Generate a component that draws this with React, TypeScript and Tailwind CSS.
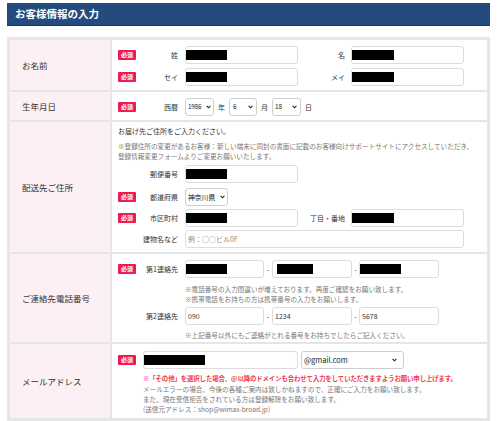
import React from "react";

function Badge() {
  return (
    <span className="w-[18px] h-[10px] shrink-0 bg-[#ee1b52] text-white text-[6px] font-bold leading-[10px] text-center rounded-[1px]">
      必須
    </span>
  );
}

function Spacer() {
  return <span className="w-[18px] shrink-0" />;
}

function Chevron() {
  return (
    <svg width="5" height="4" viewBox="0 0 5 4" className="shrink-0">
      <polyline points="0.6,0.8 2.5,2.8 4.4,0.8" fill="none" stroke="#222" strokeWidth="1.1" />
    </svg>
  );
}

function Box({ className, children }: { className: string; children?: React.ReactNode }) {
  return (
    <div className={"h-[18px] shrink-0 border border-[#dcdcdc] rounded-[3px] bg-white flex items-center text-[7px] text-[#333] " + className}>
      {children}
    </div>
  );
}

function Sel({ className, children }: { className: string; children: React.ReactNode }) {
  return (
    <div className={"h-[18px] shrink-0 border border-[#cfcfcf] rounded-[3px] bg-white flex items-center justify-between text-[#222] " + className}>
      <span className="whitespace-nowrap">{children}</span>
      <Chevron />
    </div>
  );
}

function Label({ className, children }: { className: string; children: React.ReactNode }) {
  return <span className={"shrink-0 text-right text-[7px] text-[#333] leading-[10px] " + className}>{children}</span>;
}

function Row({ label, className, children, last }: { label: string; className: string; children: React.ReactNode; last?: boolean }) {
  return (
    <div className={"flex " + className + (last ? "" : " border-b-2 border-[#e6e6e6]")}>
      <div className="w-[102px] shrink-0 bg-[#fdf0f4] border-r-2 border-[#e6e6e6] flex items-center pl-[12px] text-[8.5px] text-[#333]">
        {label}
      </div>
      <div className="flex-1 pl-[6px]">{children}</div>
    </div>
  );
}

export default function App() {
  return (
    <div className="w-[500px] h-[421px] bg-white font-['Noto_Sans_CJK_JP',sans-serif] pt-[3px] overflow-hidden">
      <div className="ml-[7px] w-[483px] h-[23px] bg-[#244b7d] border-b border-[#16356a] flex items-center pl-[8px] text-white text-[10.5px] font-bold">
        お客様情報の入力
      </div>
      <div className="ml-[7px] mt-[11px] w-[483px] border-[3px] border-[#e6e6e6]">
        {/* お名前 */}
        <Row label="お名前" className="h-[52px]">
          <div className="pt-[6px] flex flex-col gap-[4px]">
            <div className="flex items-center">
              <Badge />
              <Label className="w-[42px] mr-[7px]">姓</Label>
              <Box className="w-[113px]"><span className="block w-[41px] h-[10px] bg-black" /></Box>
              <Label className="w-[47px] mr-[6px]">名</Label>
              <Box className="w-[113px]"><span className="block w-[42px] h-[10px] bg-black" /></Box>
            </div>
            <div className="flex items-center">
              <Badge />
              <Label className="w-[42px] mr-[7px]">セイ</Label>
              <Box className="w-[113px]"><span className="block w-[41px] h-[10px] bg-black" /></Box>
              <Label className="w-[47px] mr-[6px]">メイ</Label>
              <Box className="w-[113px]"><span className="block w-[42px] h-[10px] bg-black" /></Box>
            </div>
          </div>
        </Row>

        {/* 生年月日 */}
        <Row label="生年月日" className="h-[30px]">
          <div className="pt-[6px] flex items-center">
            <Badge />
            <Label className="w-[42px] mr-[7px]">西暦</Label>
            <Sel className="w-[29px] pl-[2px] pr-[2px] text-[6.3px] tracking-[-0.2px]">1986</Sel>
            <span className="text-[7px] text-[#333] mx-[4px]">年</span>
            <Sel className="w-[28px] pl-[3px] pr-[3px] text-[6.5px]">6</Sel>
            <span className="text-[7px] text-[#333] mx-[4px]">月</span>
            <Sel className="w-[29px] pl-[2px] pr-[3px] text-[6.5px]">18</Sel>
            <span className="text-[7px] text-[#333] ml-[4px]">日</span>
          </div>
        </Row>

        {/* 配送先ご住所 */}
        <Row label="配送先ご住所" className="h-[132px]">
          <div className="pt-[4px] flex flex-col">
            <p className="text-[7px] leading-[10px] text-[#333]">お届け先ご住所をご入力ください。</p>
            <p className="mt-[5px] text-[6.6px] leading-[10px] text-[#777]">
              ※登録住所の変更があるお客様：新しい端末に同封の書面に記載のお客様向けサポートサイトにアクセスしていただき、
              <br />
              登録情報変更フォームよりご変更お願いいたします。
            </p>
            <div className="mt-[4px] flex items-center">
              <Spacer />
              <Label className="w-[42px] mr-[7px]">郵便番号</Label>
              <Box className="w-[113px]"><span className="block w-[41px] h-[10px] bg-black" /></Box>
            </div>
            <div className="mt-[5px] flex items-center">
              <Badge />
              <Label className="w-[42px] mr-[7px]">都道府県</Label>
              <Sel className="w-[43px] pl-[2px] pr-[2px] text-[6.8px]">神奈川県</Sel>
            </div>
            <div className="mt-[3px] flex items-center">
              <Badge />
              <Label className="w-[42px] mr-[7px]">市区町村</Label>
              <Box className="w-[113px]"><span className="block w-[41px] h-[10px] bg-black" /></Box>
              <Label className="w-[47px] mr-[6px]">丁目・番地</Label>
              <Box className="w-[113px]"><span className="block w-[42px] h-[10px] bg-black" /></Box>
            </div>
            <div className="mt-[3px] flex items-center">
              <Spacer />
              <Label className="w-[42px] mr-[7px]">建物名など</Label>
              <Box className="w-[279px] pl-[2px]"><span className="text-[#888]">例：○○ビル0F</span></Box>
            </div>
          </div>
        </Row>

        {/* ご連絡先電話番号 */}
        <Row label="ご連絡先電話番号" className="h-[90px]">
          <div className="pt-[6px] flex flex-col">
            <div className="flex items-center">
              <Badge />
              <Label className="w-[42px] mr-[7px]">第1連絡先</Label>
              <Box className="w-[79px]"><span className="block w-[41px] h-[10px] bg-black" /></Box>
              <span className="w-[8px] text-center text-[7px] text-[#333]">-</span>
              <Box className="w-[80px] pl-[4px]"><span className="block w-[36px] h-[10px] bg-black" /></Box>
              <span className="w-[7px] text-center text-[7px] text-[#333]">-</span>
              <Box className="w-[80px]"><span className="block w-[41px] h-[10px] bg-black" /></Box>
            </div>
            <p className="mt-[6px] ml-[67px] text-[6.6px] leading-[10px] text-[#777]">
              ※電話番号の入力間違いが増えております。再度ご確認をお願い致します。
              <br />
              ※携帯電話をお持ちの方は携帯番号の入力をお願いします。
            </p>
            <div className="mt-[3px] flex items-center">
              <Spacer />
              <Label className="w-[42px] mr-[7px]">第2連絡先</Label>
              <Box className="w-[79px] pl-[2px]">090</Box>
              <span className="w-[8px] text-center text-[7px] text-[#333]">-</span>
              <Box className="w-[80px] pl-[2px]">1234</Box>
              <span className="w-[7px] text-center text-[7px] text-[#333]">-</span>
              <Box className="w-[80px] pl-[2px]">5678</Box>
            </div>
            <p className="mt-[5px] ml-[67px] text-[6.6px] leading-[10px] text-[#777]">
              ※上記番号以外にもご連絡がとれる番号をお持ちでしたらご記入ください。
            </p>
          </div>
        </Row>

        {/* メールアドレス */}
        <Row label="メールアドレス" className="h-[74px]" last>
          <div className="pt-[7px] flex flex-col">
            <div className="flex items-center">
              <Badge />
              <Box className="w-[155px] ml-[7px]"><span className="block w-[61px] h-[10px] bg-black" /></Box>
              <Sel className="w-[103px] ml-[3px] pl-[2px] pr-[6px] text-[7.5px]">@gmail.com</Sel>
            </div>
            <div className="mt-[5px] ml-[25px] text-[6.6px] leading-[10px] text-[#777]">
              <p className="text-[#f0394f] font-bold text-[6.4px] tracking-[-0.1px]">※「その他」を選択した場合、@以降のドメインも合わせて入力をしていただきますようお願い申し上げます。</p>
              <p>メールエラーの場合、今後の各種ご案内は致しかねますので、正確にご入力をお願い致します。</p>
              <p>また、現在受信拒否をされている方は登録解除をお願い致します。</p>
              <p>(送信元アドレス：shop@wimax-broad.jp)</p>
            </div>
          </div>
        </Row>
      </div>
    </div>
  );
}
